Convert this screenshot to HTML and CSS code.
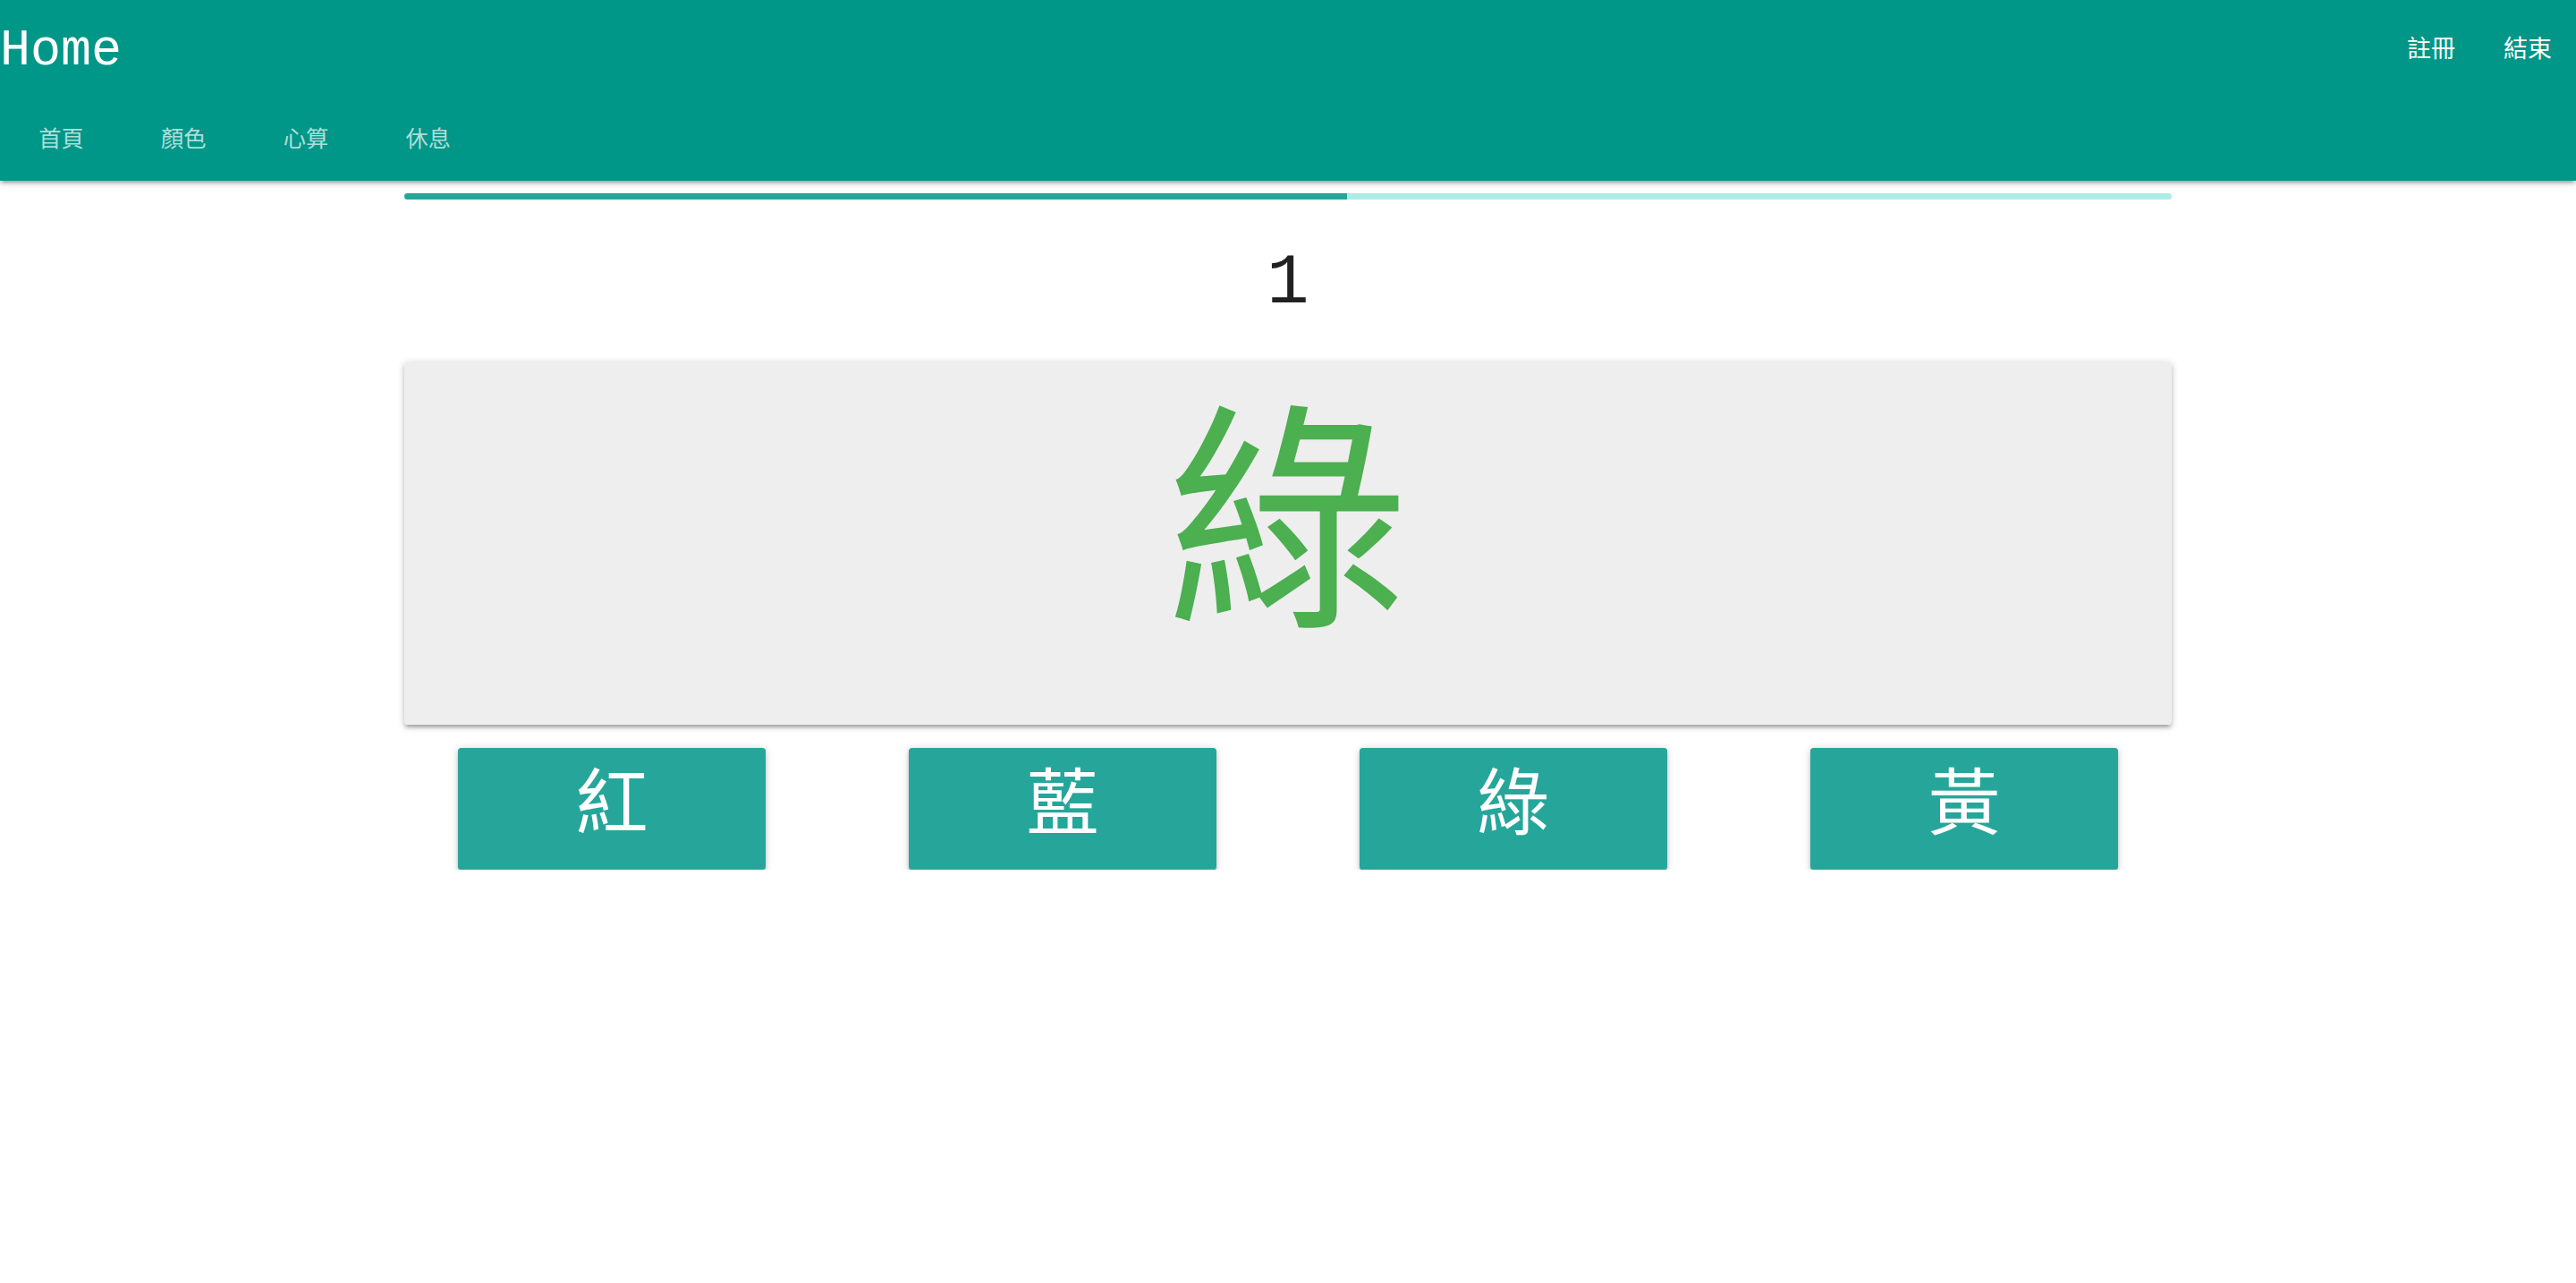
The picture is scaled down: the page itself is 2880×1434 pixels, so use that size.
FILE: index.html
```html
<!DOCTYPE html>
<html lang="zh-Hant">
<head>
<meta charset="utf-8">
<title>Home</title>
<link rel="stylesheet" href="styles.css">
</head>
<body>
<header class="nav">
  <div class="nav-top">
    <a class="brand" href="#">Home</a>
    <ul class="nav-links">
      <li><a href="#">註冊</a></li>
      <li><a href="#">結束</a></li>
    </ul>
  </div>
  <ul class="tabs">
    <li class="tab"><a href="#">首頁</a></li>
    <li class="tab"><a href="#">顏色</a></li>
    <li class="tab"><a href="#">心算</a></li>
    <li class="tab"><a href="#">休息</a></li>
  </ul>
</header>
<main class="container">
  <div class="progress"><div class="determinate" style="width: 53.34%"></div></div>
  <h3 class="count">1</h3>
  <div class="card">綠</div>
  <div class="choices">
    <button class="btn">紅</button>
    <button class="btn">藍</button>
    <button class="btn">綠</button>
    <button class="btn">黃</button>
  </div>
</main>
</body>
</html>
```

FILE: styles.css
```css
html, body {
  margin: 0;
  padding: 0;
  background: #ffffff;
}
body {
  font-family: "Liberation Mono", "Noto Sans CJK TC", monospace;
  color: rgba(0, 0, 0, 0.87);
}
a {
  text-decoration: none;
  color: inherit;
}
ul {
  list-style: none;
  margin: 0;
  padding: 0;
}

.nav {
  background: #009688;
  color: #ffffff;
  box-shadow: 0 3.6px 3.6px 0 rgba(0,0,0,0.14), 0 5.4px 1.8px -3.6px rgba(0,0,0,0.12), 0 1.8px 9px 0 rgba(0,0,0,0.2);
  position: relative;
  z-index: 2;
}
.nav-top {
  height: 115.2px;
  line-height: 115.2px;
  display: flex;
  justify-content: space-between;
}
.brand {
  font-size: 56.7px;
  color: #ffffff;
  white-space: nowrap;
}
.nav-links {
  display: flex;
}
.nav-links a {
  display: block;
  padding: 0 27px;
  font-size: 27px;
  color: #ffffff;
}
.tabs {
  display: flex;
  height: 86.4px;
  line-height: 86.4px;
}
.tab a {
  display: block;
  padding: 0 43.2px;
  font-size: 25.2px;
  color: rgba(255, 255, 255, 0.7);
}

.container {
  width: 1976px;
  margin: 0 auto;
}
.progress {
  height: 7.2px;
  margin-top: 14px;
  background: #acece6;
  border-radius: 3.6px;
  overflow: hidden;
}
.determinate {
  height: 100%;
  background: #26a69a;
}
.count {
  margin: 55px 0 48.6px;
  font-size: 78.8px;
  line-height: 78.8px;
  font-weight: 400;
  text-align: center;
  color: #212121;
}
.card {
  box-sizing: border-box;
  height: 405px;
  padding-top: 23px;
  background: #eeeeee;
  border-radius: 3.6px;
  box-shadow: 0 3.6px 3.6px 0 rgba(0,0,0,0.14), 0 5.4px 1.8px -3.6px rgba(0,0,0,0.12), 0 1.8px 9px 0 rgba(0,0,0,0.2);
  font-family: "Noto Sans CJK TC", sans-serif;
  font-size: 270px;
  line-height: 1;
  text-align: center;
  color: #4caf50;
}
.choices {
  display: flex;
  gap: 160px;
  padding: 0 60px;
  margin-top: 26px;
}
.btn {
  width: 344px;
  height: 136px;
  border: none;
  border-radius: 3.6px;
  background: #26a69a;
  color: #ffffff;
  font-family: "Liberation Mono", "Noto Sans CJK TC", monospace;
  font-size: 81px;
  line-height: 1;
  padding: 0;
  display: flex;
  align-items: center;
  justify-content: center;
  box-shadow: 0 3.6px 3.6px 0 rgba(0,0,0,0.14), 0 5.4px 1.8px -3.6px rgba(0,0,0,0.12), 0 1.8px 9px 0 rgba(0,0,0,0.2);
  cursor: pointer;
}
```
